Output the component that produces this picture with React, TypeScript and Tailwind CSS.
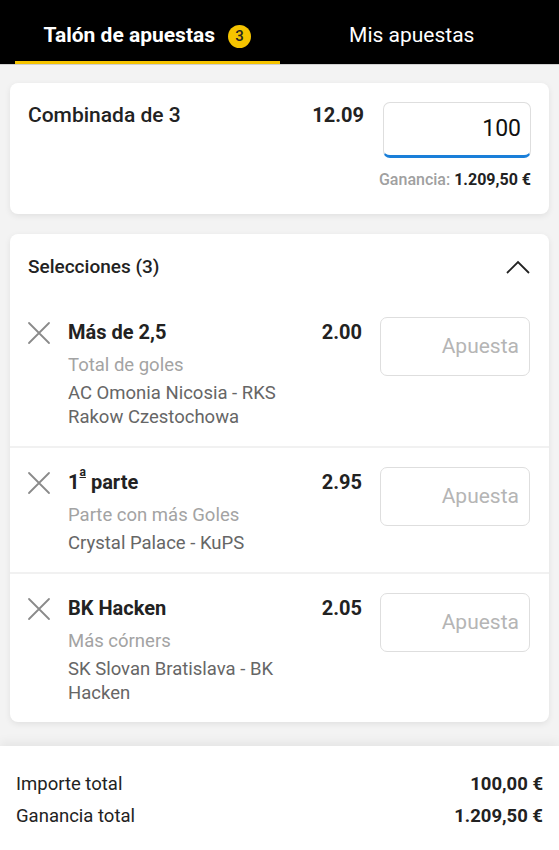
import React from "react";

const font = { fontFamily: "Roboto, 'Liberation Sans', sans-serif" };

function XIcon() {
  return (
    <svg width="24" height="24" viewBox="0 0 24 24" className="shrink-0">
      <path d="M2 2 L22 22 M22 2 L2 22" stroke="#8a8a8a" strokeWidth="1.8" strokeLinecap="round" />
    </svg>
  );
}

function Selection({ title, odds, market, event, last }: { title: React.ReactNode; odds: string; market: string; event: string; last?: boolean }) {
  return (
    <div className={`flex pl-[17px] pr-[19px] pt-[21px] pb-[17px] ${last ? "" : "border-b-2 border-[#f1f1f1]"}`}>
      <div className="pt-[2px] pr-[17px]"><XIcon /></div>
      <div className="flex-1 min-w-0">
        <div className="text-[20px] font-bold text-[#222] leading-[26px]">{title}</div>
        <div className="text-[18.5px] text-[#a3a3a3] leading-[25px] mt-[8px]">{market}</div>
        <div className="text-[18.5px] text-[#666] leading-[24px] mt-[3px] w-[230px]">{event}</div>
      </div>
      <div className="text-[20px] font-bold text-[#222] leading-[26px] pr-[18px]">{odds}</div>
      <div className="w-[150px] h-[59px] -mt-[2px] border border-[#dedede] rounded-[7px] flex items-center justify-end pr-[10px] text-[21px] text-[#b5b5b5]">Apuesta</div>
    </div>
  );
}

export default function App() {
  return (
    <div className="w-[559px] h-[850px] bg-[#f3f3f3] overflow-hidden font-stretch-[96%] relative" style={font}>
      {/* header */}
      <div className="h-[65px] bg-black flex px-[15px] border-b border-[#d0d0d0]">
        <div className="w-[265px] flex items-center justify-center gap-[13px] border-b-[3px] border-[#f5c400] pt-[11px]">
          <span className="text-white font-bold text-[21px]">Talón de apuestas</span>
          <span className="w-[23px] h-[23px] rounded-full bg-[#f5c400] text-[#222] text-[15px] font-medium flex items-center justify-center">3</span>
        </div>
        <div className="w-[265px] flex items-center justify-center pt-[8px]">
          <span className="text-white text-[21px] font-normal">Mis apuestas</span>
        </div>
      </div>

      {/* card 1 */}
      <div className="mx-[10px] mt-[18px] bg-white rounded-[8px] shadow-[0_2px_6px_rgba(0,0,0,0.08)] px-[18px] pt-[19px] pb-[23px]">
        <div className="flex">
          <div className="flex-1 text-[21px] font-medium text-[#222] leading-[28px] mt-[-1px]">Combinada de 3</div>
          <div className="text-[20px] font-bold text-[#222] leading-[28px] pr-[19px] mt-[-1px]">12.09</div>
          <div className="w-[148px] h-[56px] border border-[#dedede] border-b-[3px] border-b-[#1a7fd9] rounded-[7px] flex items-center justify-end pr-[9px] text-[23px] text-[#111]">100</div>
        </div>
        <div className="text-right text-[16px] mt-[11px] leading-[22px]">
          <span className="text-[#a0a0a0] font-medium">Ganancia: </span>
          <span className="text-[#222] font-bold">1.209,50 €</span>
        </div>
      </div>

      {/* card 2 */}
      <div className="mx-[10px] mt-[20px] bg-white rounded-[8px] shadow-[0_2px_6px_rgba(0,0,0,0.08)]">
        <div className="flex items-center justify-between pl-[18px] pr-[18px] pt-[20px] pb-[18px] h-[64px]">
          <span className="text-[19px] font-medium text-[#222] leading-[26px]">Selecciones (3)</span>
          <svg width="26" height="16" viewBox="0 0 26 16">
            <path d="M2 14 L13 3 L24 14" fill="none" stroke="#222" strokeWidth="1.8" />
          </svg>
        </div>
        <Selection title="Más de 2,5" odds="2.00" market="Total de goles" event="AC Omonia Nicosia - RKS Rakow Czestochowa" />
        <Selection title={<span>1<sup className="text-[12px] align-[7px] underline">a</sup> parte</span>} odds="2.95" market="Parte con más Goles" event="Crystal Palace - KuPS" />
        <Selection title="BK Hacken" odds="2.05" market="Más córners" event="SK Slovan Bratislava - BK Hacken" last />
      </div>

      {/* bottom panel */}
      <div className="absolute left-0 right-0 bottom-0 h-[104px] bg-white shadow-[0_-4px_10px_rgba(0,0,0,0.06)] px-[16px] pt-[22px]">
        <div className="flex justify-between text-[18.5px] leading-[32px] text-[#222]">
          <span>Importe total</span>
          <span className="font-bold">100,00 €</span>
        </div>
        <div className="flex justify-between text-[18.5px] leading-[32px] text-[#222]">
          <span>Ganancia total</span>
          <span className="font-bold">1.209,50 €</span>
        </div>
      </div>
    </div>
  );
}
